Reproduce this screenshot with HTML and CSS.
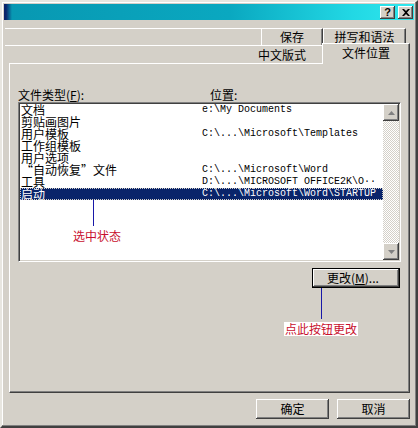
FILE: index.html
```html
<!DOCTYPE html>
<html lang="zh-CN">
<head>
  <meta charset="UTF-8" />
  <meta name="viewport" content="width=device-width, initial-scale=1.0"/>
  <title>选项 - 文件位置</title>
  <link rel="stylesheet" href="styles.css">
</head>
<body>

<div class="dialog">
  <div class="titlebar">
    <span class="title-btn">?</span>
    <span class="title-btn">
      <svg width="8" height="7" viewBox="0 0 8 7"><path d="M0 0h2l2 2 2-2h2L5 3.5 8 7H6L4 5 2 7H0l3-3.5z" fill="#000"/></svg>
    </span>
  </div>

  <!-- 两排标签页，后排在上 -->
  <div class="tab-row back">
    <div class="tab-fill"></div>
    <div class="tab">保存</div>
    <div class="tab wide">拼写和语法</div>
  </div>
  <div class="tab-row front">
    <div class="tab-fill"><span class="tab-text">中文版式</span></div>
    <div class="tab active">文件位置</div>
  </div>

  <div class="panel">
    <div class="list-labels">
      <span class="col-name">文件类型(<u>F</u>):</span>
      <span>位置:</span>
    </div>

    <div class="listbox">
      <div class="list-rows">
        <div class="list-row"><span class="col-name">文档</span><span class="col-path">e:\My Documents</span></div>
        <div class="list-row"><span class="col-name">剪贴画图片</span><span class="col-path"></span></div>
        <div class="list-row"><span class="col-name">用户模板</span><span class="col-path">C:\...\Microsoft\Templates</span></div>
        <div class="list-row"><span class="col-name">工作组模板</span><span class="col-path"></span></div>
        <div class="list-row"><span class="col-name">用户选项</span><span class="col-path"></span></div>
        <div class="list-row"><span class="col-name">“自动恢复”文件</span><span class="col-path">C:\...\Microsoft\Word</span></div>
        <div class="list-row"><span class="col-name">工具</span><span class="col-path">D:\...\MICROSOFT OFFICE2K\O··</span></div>
        <div class="list-row selected"><span class="col-name">启动</span><span class="col-path">C:\...\Microsoft\Word\STARTUP</span></div>
      </div>
      <div class="scrollbar">
        <div class="scroll-btn">
          <svg width="7" height="4" viewBox="0 0 7 4"><path d="M3.5 0L7 4H0z" fill="#808080"/></svg>
        </div>
        <div class="scroll-track"></div>
        <div class="scroll-btn">
          <svg width="7" height="4" viewBox="0 0 7 4"><path d="M0 0h7L3.5 4z" fill="#808080"/></svg>
        </div>
      </div>
    </div>

    <div class="panel-actions">
      <button class="btn btn-default">更改(<u>M</u>)...</button>
    </div>

    <!-- 说明标注 -->
    <div class="pointer pointer-list"></div>
    <div class="note note-list">选中状态</div>
    <div class="pointer pointer-btn"></div>
    <div class="note note-btn">点此按钮更改</div>
  </div>

  <div class="footer">
    <button class="btn">确定</button>
    <button class="btn">取消</button>
  </div>
</div>

</body>
</html>
```

FILE: styles.css
```css
body {
  margin: 0;
  background: #d4d0c8;
  font-family: "Noto Sans CJK SC", "Liberation Sans", sans-serif;
  font-size: 12px;
  color: #000;
}

.dialog {
  width: 418px;
  height: 428px;
  box-sizing: border-box;
  padding: 2px;
  border: 2px solid;
  border-color: #e8e6e0 #404040 #404040 #e8e6e0;
  box-shadow: inset -1px -1px #808080, inset 1px 1px #fff;
  background: #d4d0c8;
  display: flex;
  flex-direction: column;
}

.titlebar {
  height: 16px;
  display: flex;
  justify-content: flex-end;
  align-items: center;
  gap: 3px;
  padding-right: 1px;
  background: linear-gradient(to right, #0a246a 0, #0a246a 2px, #0898b2 8px, #0aa8c0 55%, #22d8e4 85%, #30e8ee 100%);
}

.title-btn {
  width: 15px;
  height: 13px;
  box-sizing: border-box;
  background: #d4d0c8;
  box-shadow: inset -1px -1px #404040, inset 1px 1px #fff, inset -2px -2px #808080;
  display: flex;
  align-items: center;
  justify-content: center;
  font-family: "Liberation Sans", sans-serif;
  font-weight: bold;
  font-size: 11px;
  line-height: 13px;
}

/* 标签页 */
.tab-row {
  display: flex;
}

.tab-row.back {
  height: 17px;
  margin: 8px 8px 0 1px;
}

.tab-row.front {
  height: 18px;
  margin: 0 4px 0 1px;
}

.tab-fill {
  flex: 1;
  border-top: 1px solid #fff;
  display: flex;
  justify-content: flex-end;
}

.tab-text {
  padding-right: 16px;
  line-height: 17px;
}

.tab {
  width: 62px;
  box-sizing: border-box;
  border-top: 1px solid #fff;
  border-left: 1px solid #fff;
  border-right: 1px solid #404040;
  box-shadow: inset -1px 0 #808080;
  text-align: center;
  line-height: 16px;
}

.tab.wide {
  width: 83px;
}

.tab.active {
  width: 88px;
  height: 21px;
  margin-top: -2px;
  line-height: 18px;
  position: relative;
  z-index: 1;
  background: #d4d0c8;
}

/* 面板 */
.panel {
  position: relative;
  height: 330px;
  box-sizing: border-box;
  margin: 0 4px 0 5px;
  padding: 24px 8px 0 8px;
  border-top: 1px solid #fff;
  border-left: 1px solid #fff;
  border-right: 1px solid #404040;
  border-bottom: 1px solid #404040;
  box-shadow: inset -1px -1px #808080;
}

.list-labels {
  display: flex;
  height: 14px;
  line-height: 14px;
}

.list-labels .col-name {
  width: 192px;
}

.listbox {
  height: 160px;
  box-sizing: border-box;
  display: flex;
  background: #fff;
  border: 1px solid;
  border-color: #808080 #fff #fff #808080;
  box-shadow: inset 1px 1px #404040, inset -1px -1px #d4d0c8;
  padding: 1px;
}

.list-rows {
  flex: 1;
}

.list-row {
  display: flex;
  height: 12px;
  line-height: 12px;
  white-space: nowrap;
}

.list-row .col-name {
  width: 182px;
  box-sizing: border-box;
  padding-left: 1px;
}

.col-path {
  font-family: "Liberation Mono", monospace;
  font-size: 10px;
}

.list-row.selected {
  background: #0a246a;
  color: #fff;
  outline: 1px dotted #d4d0c8;
  outline-offset: -1px;
}

.scrollbar {
  width: 16px;
  display: flex;
  flex-direction: column;
}

.scroll-btn {
  height: 17px;
  background: #d4d0c8;
  box-shadow: inset -1px -1px #404040, inset 1px 1px #fff, inset -2px -2px #808080;
  display: flex;
  align-items: center;
  justify-content: center;
}

.scroll-track {
  flex: 1;
  background: repeating-conic-gradient(#fff 0 25%, #d4d0c8 0 50%) 0 0 / 2px 2px;
}

.panel-actions {
  display: flex;
  justify-content: flex-end;
  margin-top: 6px;
  padding-right: 1px;
}

.btn {
  height: 20px;
  width: 73px;
  padding: 0;
  border: none;
  background: #d4d0c8;
  font-family: inherit;
  font-size: 12px;
  line-height: 18px;
  color: #000;
  box-shadow: inset -1px -1px #404040, inset 1px 1px #fff, inset -2px -2px #808080;
}

.btn-default {
  width: 88px;
  border: 1px solid #000;
  text-align: left;
  padding-left: 14px;
}

/* 标注 */
.pointer {
  position: absolute;
  width: 1px;
  background: #1818a8;
}

.pointer-list {
  left: 83px;
  top: 136px;
  height: 26px;
}

.pointer-btn {
  left: 311px;
  top: 224px;
  height: 31px;
}

.note {
  position: absolute;
  color: #c8102e;
  line-height: 14px;
}

.note-list {
  left: 63px;
  top: 165px;
}

.note-btn {
  left: 274px;
  top: 258px;
  padding: 0 1px;
  background: #fff;
}

.footer {
  display: flex;
  justify-content: flex-end;
  gap: 8px;
  margin: 6px 4px 0 0;
}
```
